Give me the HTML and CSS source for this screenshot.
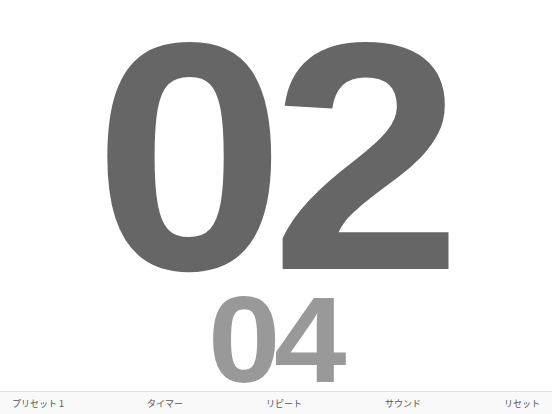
FILE: index.html
```html
<!DOCTYPE html>
<html lang="ja">
<head>
<meta charset="utf-8">
<link rel="stylesheet" href="styles.css">
</head>
<body>
<div class="app">
  <main class="display">
    <div class="big"><span class="digit">0</span><span class="digit">2</span></div>
    <div class="small"><span class="digit">0</span><span class="digit">4</span></div>
  </main>
  <nav class="tabbar">
    <span class="tab">プリセット 1</span>
    <span class="tab">タイマー</span>
    <span class="tab">リピート</span>
    <span class="tab">サウンド</span>
    <span class="tab">リセット</span>
  </nav>
</div>
</body>
</html>
```
FILE: styles.css
```css
html, body {
  margin: 0;
  padding: 0;
  background: #ffffff;
}
.app {
  width: 552px;
  height: 414px;
  display: flex;
  flex-direction: column;
  overflow: hidden;
}
.display {
  flex: 1;
  display: flex;
  flex-direction: column;
  align-items: center;
  padding-top: 27px;
  gap: 4px;
  font-family: "Liberation Sans", Arial, sans-serif;
  font-weight: bold;
}
.digit {
  display: inline-block;
  transform: scaleX(1.06);
}
.big {
  font-size: 325px;
  line-height: 0.8;
  letter-spacing: -4px;
  color: #666666;
}
.small {
  font-size: 123px;
  line-height: 0.8;
  letter-spacing: -2px;
  color: #999999;
}
.tabbar {
  height: 22px;
  border-top: 1px solid #e2e2e2;
  background: #f9f9f9;
  display: flex;
  justify-content: space-between;
  align-items: center;
  padding: 0 12px;
  font-family: "Noto Sans CJK JP", sans-serif;
  font-size: 9px;
  color: #555555;
}
```
